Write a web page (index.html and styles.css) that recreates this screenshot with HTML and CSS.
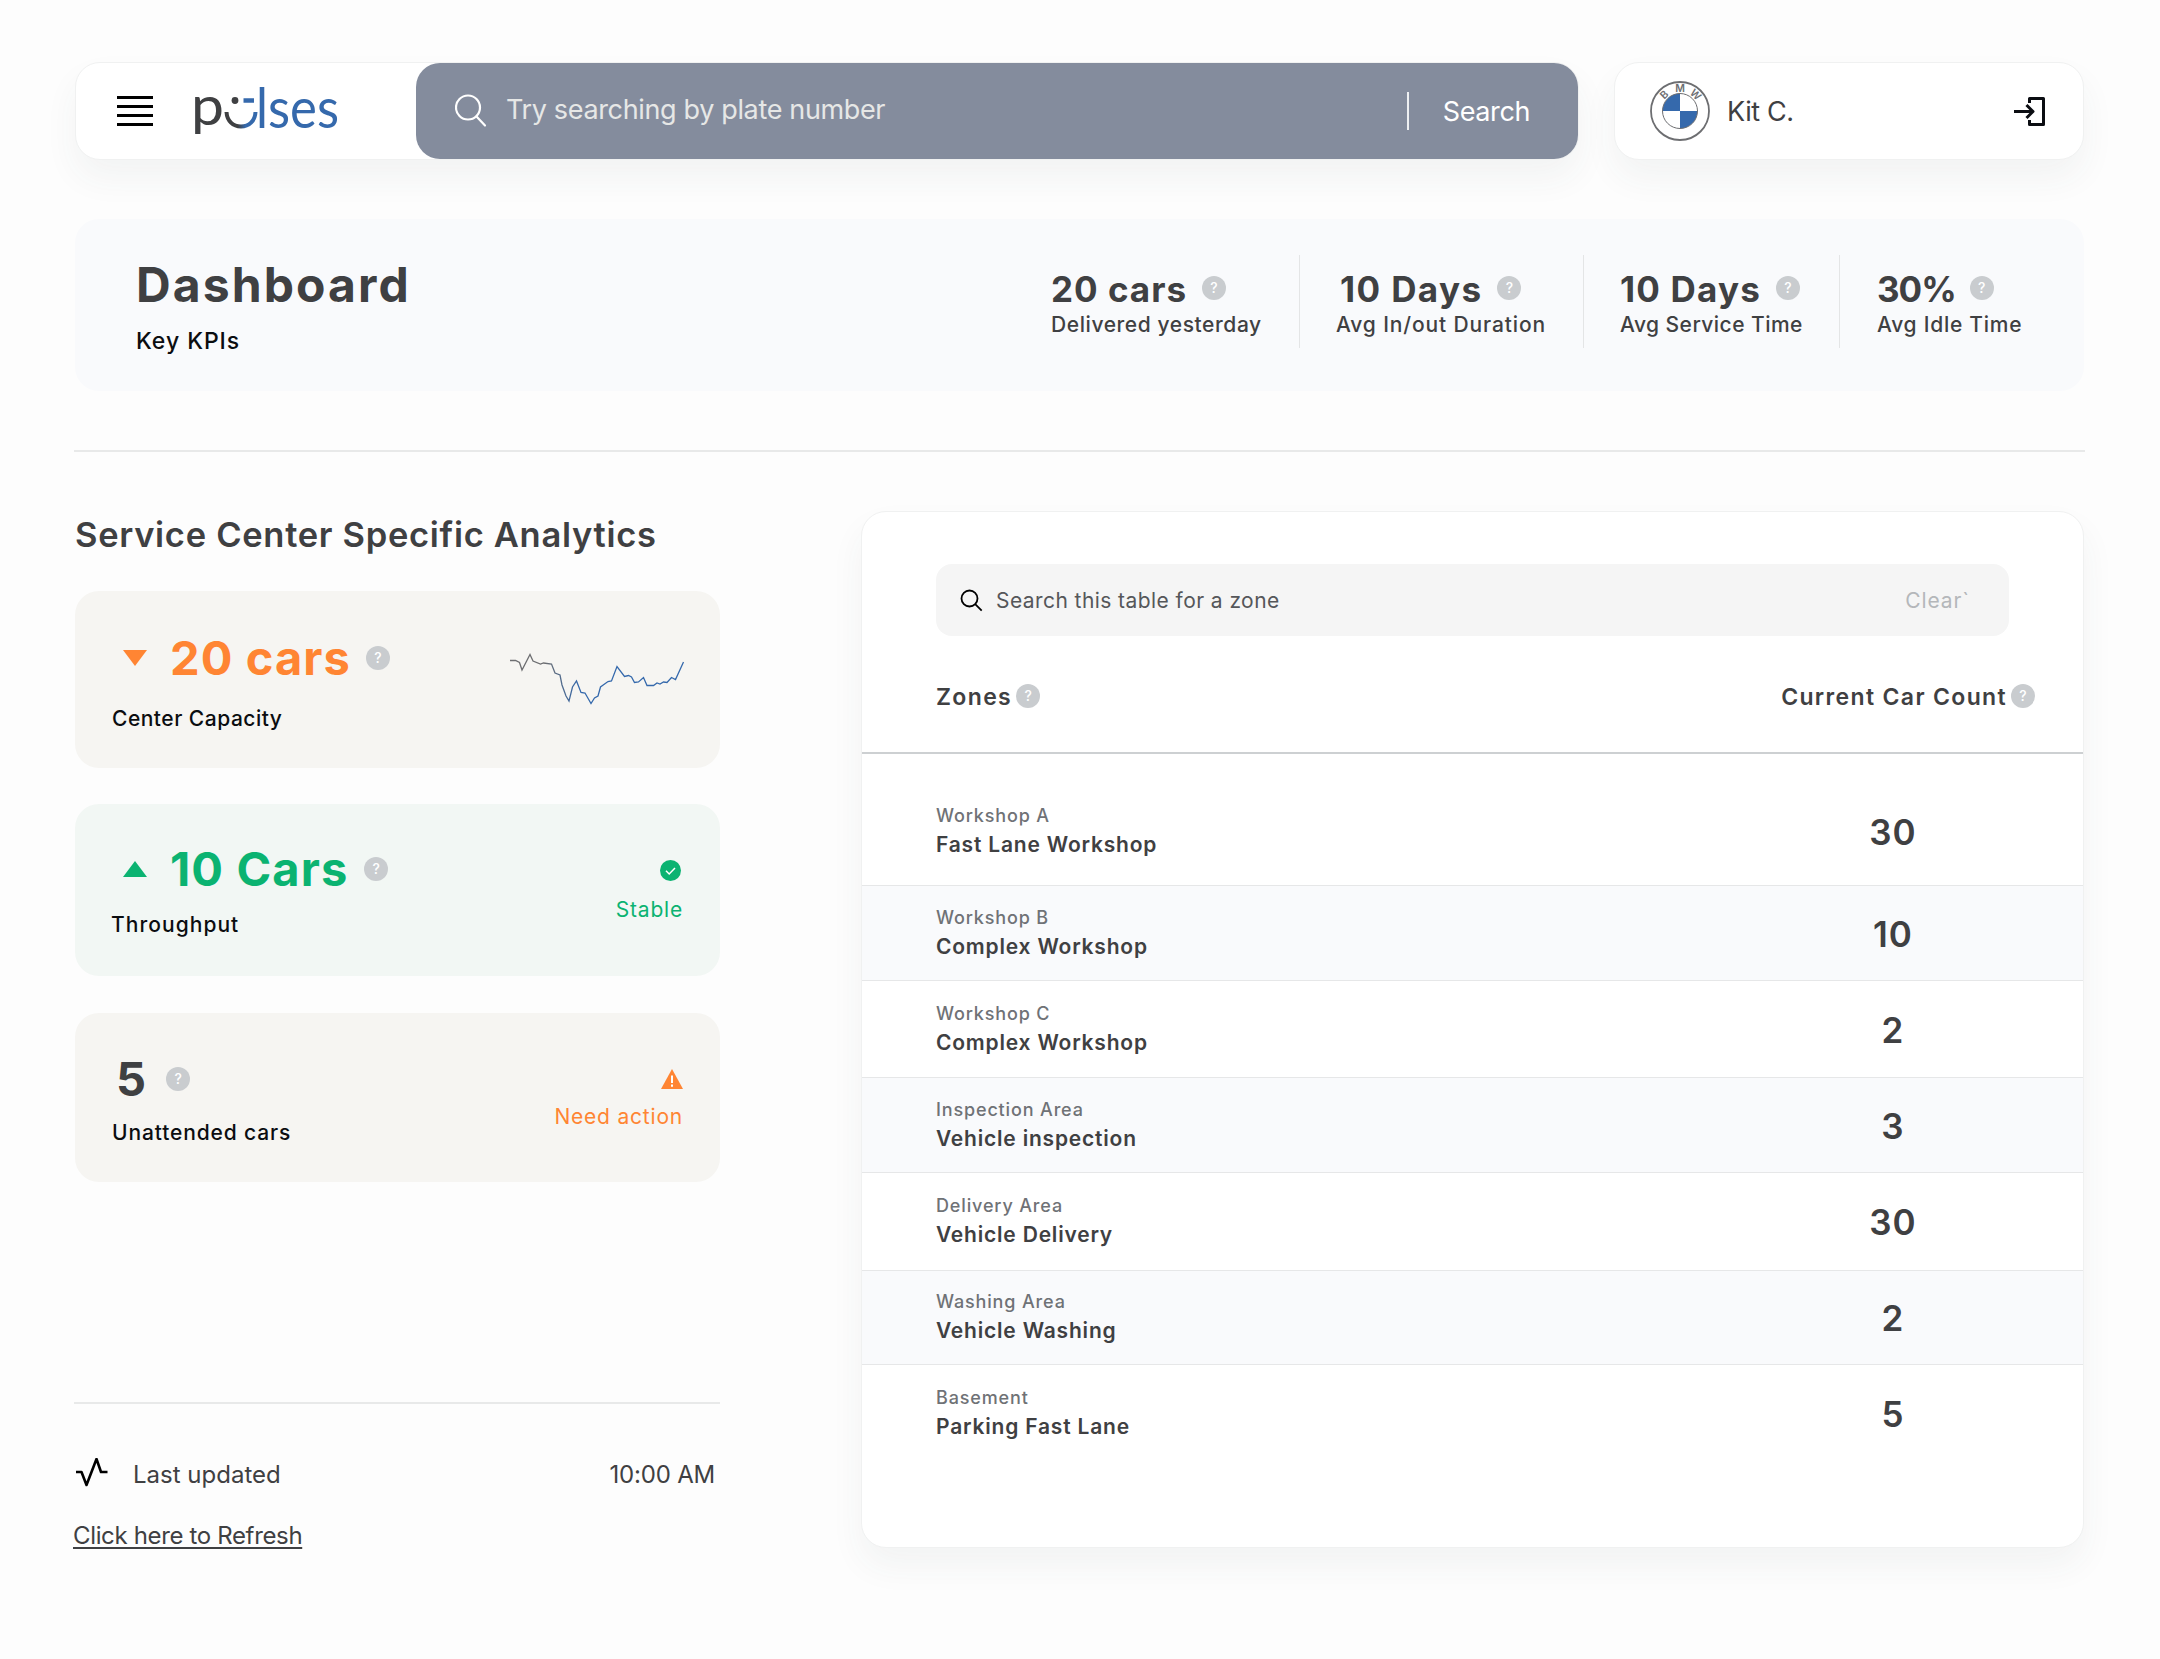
FILE: index.html
```html
<!DOCTYPE html>
<html lang="en">
<head>
<meta charset="utf-8">
<title>Pulses – Dashboard</title>
<link rel="stylesheet" href="styles.css">
</head>
<body>
<div class="page">
  <header class="header">
    <div class="nav-card">
      <svg class="menu" width="36" height="30" viewBox="0 0 36 30"><path d="M0 1.500h36M0 10.500h36M0 19.500h36M0 28.500h36" stroke="#000" stroke-width="3"/></svg>
      <svg class="logo" width="146" height="52" viewBox="0 0 146 52">
        <text class="logo-text" x="-4" y="40" font-size="54" textLength="33" lengthAdjust="spacingAndGlyphs" fill="#3f4042">p</text>
        <defs><linearGradient id="smile" x1="0" x2="1" y1="0" y2="0"><stop offset=".4" stop-color="#3f4042"/><stop offset=".65" stop-color="#3569ac"/></linearGradient></defs>
        <path d="M31.500 27c.5 9 6.500 14.500 14.500 14.500s14-5.500 14.500-14.500" fill="none" stroke="url(#smile)" stroke-width="4"/>
        <circle cx="40" cy="15.500" r="3.400" fill="#3f4042"/>
        <path d="M48.500 15.500h10.500" stroke="#3569ac" stroke-width="4.500"/>
        <text class="logo-text" x="61" y="42.500" font-size="56" textLength="83" lengthAdjust="spacingAndGlyphs" fill="#3569ac">lses</text>
      </svg>
      <div class="plate-search">
        <svg width="34" height="34" viewBox="0 0 34 34" fill="none" stroke="#fff" stroke-width="2.200" stroke-linecap="round"><circle cx="13" cy="13.500" r="12"/><path d="M21.500 22.500l8.500 9"/></svg>
        <span class="plate-hint">Try searching by plate number</span>
        <span class="plate-button">Search</span>
      </div>
    </div>
    <div class="user-card">
      <svg class="badge" width="60" height="60" viewBox="0 0 60 60">
        <circle cx="30" cy="30" r="29" fill="#fff" stroke="#6d6e71" stroke-width="1.800"/>
        <path d="M30 30V12.500A17.500 17.500 0 0 0 12.500 30zM30 30v17.500A17.500 17.500 0 0 0 47.500 30z" fill="#3569ac"/>
        <circle cx="30" cy="30" r="17.500" fill="none" stroke="#6d6e71" stroke-width="1"/>
        <g class="badge-text"><text transform="rotate(-44 30 30)" x="30" y="11">B</text><text x="30" y="11">M</text><text transform="rotate(44 30 30)" x="30" y="11">W</text></g>
      </svg>
      <span class="user-name">Kit C.</span>
      <svg class="logout" width="32" height="29" viewBox="0 0 32 29" fill="none" stroke="#0b0d12" stroke-width="3" stroke-linejoin="round"><path d="M15.500 6V1.500H29.500v26H15.500V23M0 14.500h19M12.500 8l6.500 6.500-6.500 6.500"/></svg>
    </div>
  </header>

  <section class="kpis">
    <div class="kpi-title">
      <h1>Dashboard</h1>
      <p>Key KPIs</p>
    </div>
    <div class="metric metric-cars">
      <div class="metric-value"><b>20 cars</b><i class="help">?</i></div>
      <div class="metric-label">Delivered yesterday</div>
    </div>
    <div class="metric metric-inout">
      <div class="metric-value"><b>10 Days</b><i class="help">?</i></div>
      <div class="metric-label">Avg In/out Duration</div>
    </div>
    <div class="metric metric-service">
      <div class="metric-value"><b>10 Days</b><i class="help">?</i></div>
      <div class="metric-label">Avg Service Time</div>
    </div>
    <div class="metric metric-idle">
      <div class="metric-value"><b>30%</b><i class="help">?</i></div>
      <div class="metric-label">Avg Idle Time</div>
    </div>
  </section>

  <hr class="rule">

  <main class="main">
    <section class="analytics">
      <h2>Service Center Specific Analytics</h2>
      <article class="stat stat-capacity">
        <div>
          <div class="stat-value"><svg class="arrow" width="24" height="16" viewBox="0 0 24 16"><path d="M0 0h24L12 16z" fill="#ff8533"/></svg><b>20 cars</b><i class="help">?</i></div>
          <div class="stat-label">Center Capacity</div>
        </div>
        <svg class="spark" width="176" height="54" viewBox="9 13 176 54">
          <defs><linearGradient id="trend" gradientUnits="userSpaceOnUse" x1="10" x2="184" y1="0" y2="0"><stop offset=".2" stop-color="#6d6e71"/><stop offset=".4" stop-color="#3569ac"/></linearGradient></defs>
          <polyline fill="none" stroke="url(#trend)" stroke-width="1.300" points="10,20.500 15.500,20.500 19.500,22.500 22,30 30,14.500 33,21 40.500,24 43.500,23 51.500,24 55,33 60,35 62,45 66,56 69,61 72.500,47 76.500,41 81,52.500 85,53 91,63.500 94.500,58 98,56 100.500,47 108,41.500 111.500,41 117,26.500 124.500,36.500 128.500,35.500 131.500,37 134.500,42.500 138.500,42 143.500,37.500 147,45.500 153.500,45.500 157,43 160,44 163.500,42 167,42.500 171.500,37.500 175.500,39.500 183.500,22"/>
        </svg>
      </article>
      <article class="stat stat-throughput">
        <div>
          <div class="stat-value"><svg class="arrow" width="24" height="16" viewBox="0 0 24 16"><path d="M0 16h24L12 0z" fill="#0bb371"/></svg><b>10 Cars</b><i class="help">?</i></div>
          <div class="stat-label">Throughput</div>
        </div>
        <div class="status">
          <svg class="status-check" width="21" height="21" viewBox="0 0 21 21"><circle cx="10.500" cy="10.500" r="10.500" fill="#0bb371"/><path d="M6 10.800l3.200 3.200 5.800-6" fill="none" stroke="#fff" stroke-width="1.500"/></svg>
          <span>Stable</span>
        </div>
      </article>
      <article class="stat stat-unattended">
        <div>
          <div class="stat-value"><b>5</b><i class="help">?</i></div>
          <div class="stat-label">Unattended cars</div>
        </div>
        <div class="status">
          <svg width="22" height="20" viewBox="0 0 22 20"><path d="M11 0l11 20H0z" fill="#ff8533"/><path d="M11 6.500v7.500M11 15.500v2.200" stroke="#fff" stroke-width="2"/></svg>
          <span>Need action</span>
        </div>
      </article>
      <hr class="rule rule-left">
      <div class="updated">
        <svg width="34" height="30" viewBox="0 0 34 30" fill="none" stroke="#000" stroke-width="2.600" stroke-linejoin="round"><path d="M1 14h5.500l5 13L21.500 1 26 14h6.500"/></svg>
        <span>Last updated</span>
        <time>10:00 AM</time>
      </div>
      <a class="refresh">Click here to Refresh</a>
    </section>

    <section class="zones">
      <div class="zone-search">
        <svg width="23" height="23" viewBox="0 0 23 23" fill="none" stroke="#000" stroke-width="1.800"><circle cx="9.500" cy="9.500" r="8"/><path d="M15.200 15.200l6.500 6.500"/></svg>
        <span>Search this table for a zone</span>
        <span class="clear">Clear`</span>
      </div>
      <div class="zone-head">
        <div class="head-cell"><span>Zones</span><i class="help">?</i></div>
        <div class="head-cell head-count"><span>Current Car Count</span><i class="help">?</i></div>
      </div>
      <div class="row row-a"><div><small>Workshop A</small><strong>Fast Lane Workshop</strong></div><b class="count">30</b></div>
      <div class="row row-b"><div><small>Workshop B</small><strong>Complex Workshop</strong></div><b class="count">10</b></div>
      <div class="row row-c"><div><small>Workshop C</small><strong>Complex Workshop</strong></div><b class="count">2</b></div>
      <div class="row row-d"><div><small>Inspection Area</small><strong>Vehicle inspection</strong></div><b class="count">3</b></div>
      <div class="row row-e"><div><small>Delivery Area</small><strong>Vehicle Delivery</strong></div><b class="count">30</b></div>
      <div class="row row-f"><div><small>Washing Area</small><strong>Vehicle Washing</strong></div><b class="count">2</b></div>
      <div class="row row-g"><div><small>Basement</small><strong>Parking Fast Lane</strong></div><b class="count">5</b></div>
    </section>
  </main>
</div>
</body>
</html>
```
FILE: styles.css
```css
* { box-sizing: border-box; }
body { margin: 0; background: #fdfdfd; color: #3f4042; font-family: Inter, sans-serif; }
h1, h2, p { margin: 0; }
svg { display: block; flex: none; }
.page { width: 2160px; height: 1659px; padding: 62px 76px 0 75px; overflow: hidden; white-space: nowrap; }

/* header */
.header { display: flex; gap: 35px; height: 98px; }
.nav-card, .user-card { display: flex; align-items: center; background: #fff; border: 1px solid #f0f1f1; border-radius: 25px; box-shadow: 0 18px 34px rgba(60, 75, 70, .055); }
.nav-card { width: 1504px; padding-left: 41px; }
.logo { margin-left: 42px; overflow: visible; }
.logo-text { font-family: Lato, sans-serif; font-weight: 400; }
.plate-search { display: flex; align-items: center; width: 1162px; height: 96px; margin-left: auto; padding: 0 48px 0 39px; border-radius: 24px; background: #848c9d; color: #fff; font-size: 27px; letter-spacing: -.35px; }
.plate-hint { margin: -3px auto 0 17px; color: #e6e7e6; }
.plate-button { display: flex; align-items: center; height: 38px; padding-left: 34px; border-left: 2px solid #eef0f2; letter-spacing: -.4px; }
.user-card { flex: 1; padding: 0 37px 0 35px; border-radius: 25px; }
.badge-text { font: 600 10.500px Inter, sans-serif; fill: #6d6e71; text-anchor: middle; }
.user-name { margin: 0 auto 0 17px; font-size: 27px; letter-spacing: -.4px; }

/* key figures */
.kpis { display: flex; height: 172px; margin-top: 59px; border-radius: 24px; background: #f9fafc; }
.kpi-title { flex: 1; padding: 37px 0 0 61px; }
h1 { font-size: 48px; line-height: 58px; font-weight: 700; letter-spacing: 2.100px; }
.kpi-title p { margin-top: 13px; color: #0b0d10; font-size: 23px; line-height: 28px; font-weight: 500; letter-spacing: .95px; }
.metric { height: 93px; margin-top: 36px; padding: 13px 0 0 37px; border-left: 1px solid #e4e5e6; }
.metric-value { display: flex; align-items: center; gap: 15px; height: 40px; }
.metric-value b { padding-top: 1px; font-size: 35px; line-height: 40px; letter-spacing: 1px; }
.metric-label { margin-top: 4px; font-size: 21px; line-height: 26px; font-weight: 500; }
.metric-cars { width: 248px; padding-left: 0; border-left: 0; }
.metric-cars .metric-label { letter-spacing: .58px; }
.metric-inout { width: 284px; }
.metric-inout .metric-value { padding-left: 3px; }
.metric-inout b { letter-spacing: 1.400px; }
.metric-inout .metric-label { letter-spacing: .87px; margin-left: -1px; }
.metric-service { width: 256px; padding-left: 36px; }
.metric-service b { letter-spacing: 1.200px; }
.metric-service .metric-label { letter-spacing: .46px; }
.metric-idle { width: 245px; }
.metric-idle .metric-value { gap: 14px; }
.metric-idle b { letter-spacing: -1px; }
.metric-idle .metric-label { letter-spacing: .74px; }
.help { display: flex; flex: none; align-items: center; justify-content: center; width: 24px; height: 24px; border-radius: 50%; background: #c9cccf; color: #fff; font-size: 14px; line-height: 24px; font-style: normal; font-weight: 500; letter-spacing: 0; }

.rule { height: 2px; margin: 59px -1px 0; border: 0; background: #e8e9e9; }
.main { display: flex; justify-content: space-between; padding-top: 59px; }

/* left column */
.analytics { width: 645px; padding-top: 2px; }
h2 { font-size: 34.500px; line-height: 44px; font-weight: 600; letter-spacing: .7px; }
.stat { display: flex; justify-content: space-between; padding: 0 37px; border-radius: 24px; background: #f6f5f2; }
.stat-value { display: flex; align-items: center; height: 58px; }
.arrow { margin: 0 23px 0 11px; }
.stat-value b { font-size: 47px; line-height: 58px; letter-spacing: 1.100px; }
.stat-value .help { margin-left: 15px; }
.stat-label { color: #0b0d10; font-size: 21px; line-height: 26px; font-weight: 500; letter-spacing: .5px; }
.stat-capacity { height: 177px; margin-top: 34px; padding-top: 38px; }
.stat-capacity .stat-value { color: #ff8533; }
.stat-capacity .stat-label { margin-top: 19px; }
.spark { margin: 24px -2px 0 0; }
.stat-throughput { height: 172px; margin-top: 36px; padding-top: 36px; background: #f2f7f4; }
.stat-throughput .stat-value, .stat-throughput .status { color: #0bb371; }
.stat-throughput .stat-value .help { margin-left: 16px; }
.stat-throughput .stat-label { margin: 14px 0 0 -1px; letter-spacing: 1.050px; }
.stat-unattended { height: 169px; margin-top: 37px; padding-top: 37px; }
.stat-unattended .stat-value { padding-left: 4px; }
.stat-unattended .stat-value .help { margin-left: 19px; }
.stat-unattended .stat-label { margin-top: 12px; letter-spacing: .87px; }
.status { display: flex; flex-direction: column; align-items: flex-end; gap: 16px; padding-top: 20px; font-size: 21px; line-height: 26px; letter-spacing: .8px; }
.status-check { margin-right: 2px; }
.stat-unattended .status { gap: 15px; padding-top: 19px; color: #ff8533; }
.rule-left { margin: 220px 0 0 -1px; }
.updated { display: flex; align-items: center; height: 30px; margin-top: 54px; font-size: 24px; line-height: 30px; }
.updated span { margin-left: 24px; padding-top: 3px; }
.updated time { margin: 0 5px 0 auto; padding-top: 3px; letter-spacing: -.2px; }
.refresh { display: inline-block; margin: 33px 0 0 -2px; font-size: 24px; line-height: 30px; letter-spacing: -.35px; text-decoration: underline; text-decoration-thickness: 2px; text-underline-offset: 3px; text-decoration-skip-ink: none; }

/* zone table */
.zones { width: 1223px; height: 1037px; border: 1px solid #f0f1f1; border-radius: 25px; background: #fff; box-shadow: 0 18px 34px rgba(60, 75, 70, .055); }
.zone-search { display: flex; align-items: center; height: 72px; margin: 52px 74px 0; padding: 0 39px 0 24px; border-radius: 16px; background: #f5f5f5; font-size: 21px; letter-spacing: .43px; color: #55575a; }
.zone-search .clear { margin-left: auto; color: #b4b7ba; letter-spacing: .89px; }
.zone-search svg { margin-right: 13px; }
.zone-head { display: flex; justify-content: space-between; height: 118px; padding: 45px 48px 0 74px; border-bottom: 2px solid #cdd0d2; }
.head-cell { display: flex; align-items: center; gap: 4px; height: 30px; font-size: 23px; line-height: 30px; font-weight: 600; letter-spacing: 1.350px; }
.head-cell span { padding-top: 2px; }
.row { display: flex; justify-content: space-between; padding-left: 74px; border-bottom: 1px solid #e6e7e8; }
.row div { display: flex; flex-direction: column; }
.row small { color: #6f7276; font-size: 18px; line-height: 28px; font-weight: 500; letter-spacing: .85px; }
.row strong { font-size: 21px; line-height: 30px; font-weight: 600; letter-spacing: .8px; }
.count { width: 380px; padding-top: 2px; font-size: 35px; line-height: 56px; font-weight: 600; letter-spacing: 1px; text-align: center; }
.row-a { height: 132px; padding-top: 48px; }
.row-b { height: 95px; padding-top: 18px; background: #f9fafc; }
.row-c { height: 97px; padding-top: 19px; }
.row-d { height: 95px; padding-top: 18px; background: #f9fafc; }
.row-e { height: 98px; padding-top: 19px; }
.row-f { height: 94px; padding-top: 17px; background: #f9fafc; }
.row-g { padding-top: 19px; border-bottom: 0; }
```
